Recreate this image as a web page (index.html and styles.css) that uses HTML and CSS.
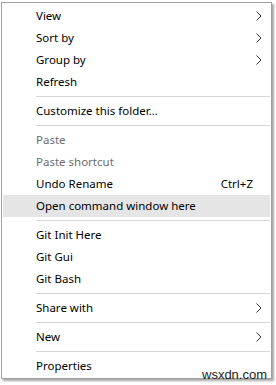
FILE: index.html
```html
<!DOCTYPE html>
<html lang="en">
<head>
  <meta charset="UTF-8">
  <meta name="viewport" content="width=device-width, initial-scale=1.0">
  <title>Context menu</title>
  <link rel="stylesheet" href="styles.css">
</head>
<body>
  <div class="menu">
    <div class="item"><span class="label">View</span><svg class="arrow" width="6" height="10" viewBox="0 0 6 10"><path d="M0.5 0.5 L5 5 L0.5 9.5" /></svg></div>
    <div class="item"><span class="label">Sort by</span><svg class="arrow" width="6" height="10" viewBox="0 0 6 10"><path d="M0.5 0.5 L5 5 L0.5 9.5" /></svg></div>
    <div class="item"><span class="label">Group by</span><svg class="arrow" width="6" height="10" viewBox="0 0 6 10"><path d="M0.5 0.5 L5 5 L0.5 9.5" /></svg></div>
    <div class="item"><span class="label">Refresh</span></div>
    <div class="sep"></div>
    <div class="item"><span class="label">Customize this folder...</span></div>
    <div class="sep"></div>
    <div class="item disabled"><span class="label">Paste</span></div>
    <div class="item disabled"><span class="label">Paste shortcut</span></div>
    <div class="item"><span class="label">Undo Rename</span><span class="shortcut">Ctrl+Z</span></div>
    <div class="item hover"><span class="label">Open command window here</span></div>
    <div class="sep"></div>
    <div class="item"><span class="label">Git Init Here</span></div>
    <div class="item"><span class="label">Git Gui</span></div>
    <div class="item"><span class="label">Git Bash</span></div>
    <div class="sep"></div>
    <div class="item"><span class="label">Share with</span><svg class="arrow" width="6" height="10" viewBox="0 0 6 10"><path d="M0.5 0.5 L5 5 L0.5 9.5" /></svg></div>
    <div class="sep"></div>
    <div class="item"><span class="label">New</span><svg class="arrow" width="6" height="10" viewBox="0 0 6 10"><path d="M0.5 0.5 L5 5 L0.5 9.5" /></svg></div>
    <div class="sep"></div>
    <div class="item"><span class="label">Properties</span></div>
  </div>
  <div class="watermark">wsxdn.com</div>
</body>
</html>
```

FILE: styles.css
```css
body {
  margin: 0;
  background-color: #ffffff;
  font-family: "Noto Sans", "Open Sans", sans-serif;
  font-size: 11.5px;
  color: #000000;
  position: relative;
  height: 385px;
}

.menu {
  margin: 2px 0 0 1px;
  width: 271px;
  padding: 2px 1px 1px 1px;
  box-sizing: border-box;
  background-color: #ffffff;
  border: 1px solid #a0a0a0;
  box-shadow: 2px 2px 2px rgba(0, 0, 0, 0.35);
}

.item {
  display: flex;
  align-items: center;
  height: 22px;
  padding: 0 8px 0 33px;
  line-height: 22px;
}

.item .label {
  flex: 1;
  white-space: nowrap;
}

.item.disabled {
  color: #6d6d6d;
}

.item.hover {
  background-color: #e5e5e5;
}

.shortcut {
  padding-right: 9px;
}

.arrow path {
  fill: none;
  stroke: #333333;
  stroke-width: 1;
}

.sep {
  height: 1px;
  margin: 3px 0 3px 33px;
  background-color: #d7d7d7;
}

.watermark {
  position: absolute;
  left: 202px;
  top: 367px;
  font-family: "Liberation Sans", Arial, sans-serif;
  font-size: 13px;
  color: #222222;
}
```
